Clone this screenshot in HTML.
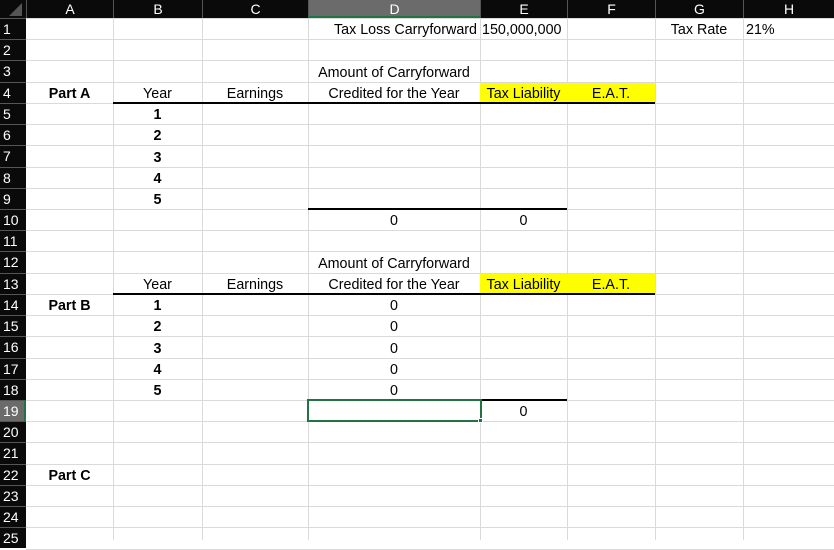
<!DOCTYPE html>
<html><head><meta charset="utf-8"><style>
body{margin:0;width:834px;height:540px;overflow:hidden;background:#fff;font-family:"Liberation Sans",Arial,sans-serif;position:relative}
.a{position:absolute;box-sizing:border-box}
.hd{background:#0a0a0a;color:#fff;font-size:14px;text-align:center;line-height:18px}
.rn{background:#0a0a0a;color:#fff;font-size:14px;padding-left:3px}
.c{font-size:14.3px;color:#000;white-space:nowrap;display:flex;align-items:flex-end;padding-bottom:1px}
</style></head><body>
<div id="g"></div>
<script>
(function(){
var X=[26,113,202,308,480,567,655,743,834],L="ABCDEFGH",H=21.22,T=18,h='';
function tp(r){return T+(r-1)*H}
for(var r=1;r<=26;r++){h+='<div class="a" style="left:26px;width:808px;top:'+Math.round(tp(r))+'px;height:1px;background:#dadada"></div>';}
for(var i=1;i<X.length-1;i++)h+='<div class="a" style="left:'+X[i]+'px;width:1px;top:18px;height:522px;background:#dadada"></div>';
h+='<div class="a hd" style="left:0;top:0;width:834px;height:18px"></div>';
h+='<div class="a" style="left:0;top:0;width:26px;height:18px;background:#0a0a0a"></div><div class="a" style="left:9px;top:3px;width:0;height:0;border-left:13px solid transparent;border-bottom:13px solid #555"></div>';
for(var i=0;i<8;i++){var bg=i==3?'#6b6b6b':'#0a0a0a';h+='<div class="a hd" style="left:'+X[i]+'px;width:'+(X[i+1]-X[i])+'px;top:0;height:18px;background:'+bg+';border-left:1px solid #555">'+L[i]+'</div>';}
h+='<div class="a" style="left:308px;width:172px;top:16px;height:2px;background:#217346"></div>';
for(var r=1;r<=25;r++){var bg=r==19?'#6b6b6b':'#0a0a0a';h+='<div class="a rn" style="left:0;width:26px;top:'+tp(r)+'px;height:'+H+'px;line-height:'+H+'px;background:'+bg+';border-top:1px solid #555">'+r+'</div>';}
h+='<div class="a" style="left:24px;width:2px;top:'+tp(19)+'px;height:'+H+'px;background:#217346"></div>';
function cell(r,c1,c2,t,al,st){var l=X[c1],w=X[c2+1]-X[c1];h+='<div class="a c" style="left:'+l+'px;width:'+w+'px;top:'+tp(r)+'px;height:'+H+'px;justify-content:'+(al||'center')+';padding-left:3px;padding-right:3px;'+(st||'')+'">'+t+'</div>';}
function fill(r,c1,c2,col){h+='<div class="a" style="left:'+X[c1]+'px;width:'+(X[c2+1]-X[c1])+'px;top:'+(tp(r)+1)+'px;height:'+(H-1)+'px;background:'+col+'"></div>';}
function line(r,c1,c2){h+='<div class="a" style="left:'+X[c1]+'px;width:'+(X[c2+1]-X[c1])+'px;top:'+(tp(r+1)-1)+'px;height:2px;background:#000"></div>';}
fill(4,4,5,'#ffff00');fill(13,4,5,'#ffff00');
cell(1,3,3,'Tax Loss Carryforward','flex-end');cell(1,4,4,'150,000,000','flex-start','padding-left:2px');
cell(1,6,6,'Tax Rate');cell(1,7,7,'21%','flex-start');
cell(3,3,3,'Amount of Carryforward');
cell(4,0,0,'Part A','center','font-weight:bold');cell(4,1,1,'Year');cell(4,2,2,'Earnings');cell(4,3,3,'Credited for the Year');cell(4,4,4,'Tax Liability');cell(4,5,5,'E.A.T.');
for(var i=1;i<=5;i++)cell(4+i,1,1,i,'center','font-weight:bold');
cell(10,3,3,'0');cell(10,4,4,'0');
cell(12,3,3,'Amount of Carryforward');
cell(13,1,1,'Year');cell(13,2,2,'Earnings');cell(13,3,3,'Credited for the Year');cell(13,4,4,'Tax Liability');cell(13,5,5,'E.A.T.');
cell(14,0,0,'Part B','center','font-weight:bold');
for(var i=1;i<=5;i++){cell(13+i,1,1,i,'center','font-weight:bold');cell(13+i,3,3,'0');}
cell(19,4,4,'0');
cell(22,0,0,'Part C','center','font-weight:bold');
line(4,1,5);line(9,3,4);line(13,1,5);line(18,3,4);
h+='<div class="a" style="left:307px;width:175px;top:'+(tp(19)-1)+'px;height:'+(H+2)+'px;border:2px solid #217346"></div>';
h+='<div class="a" style="left:478px;width:5px;top:'+(tp(20)-3)+'px;height:5px;background:#217346;border:1px solid #fff"></div>';
document.getElementById('g').innerHTML=h;
})();
</script>
</body></html>
